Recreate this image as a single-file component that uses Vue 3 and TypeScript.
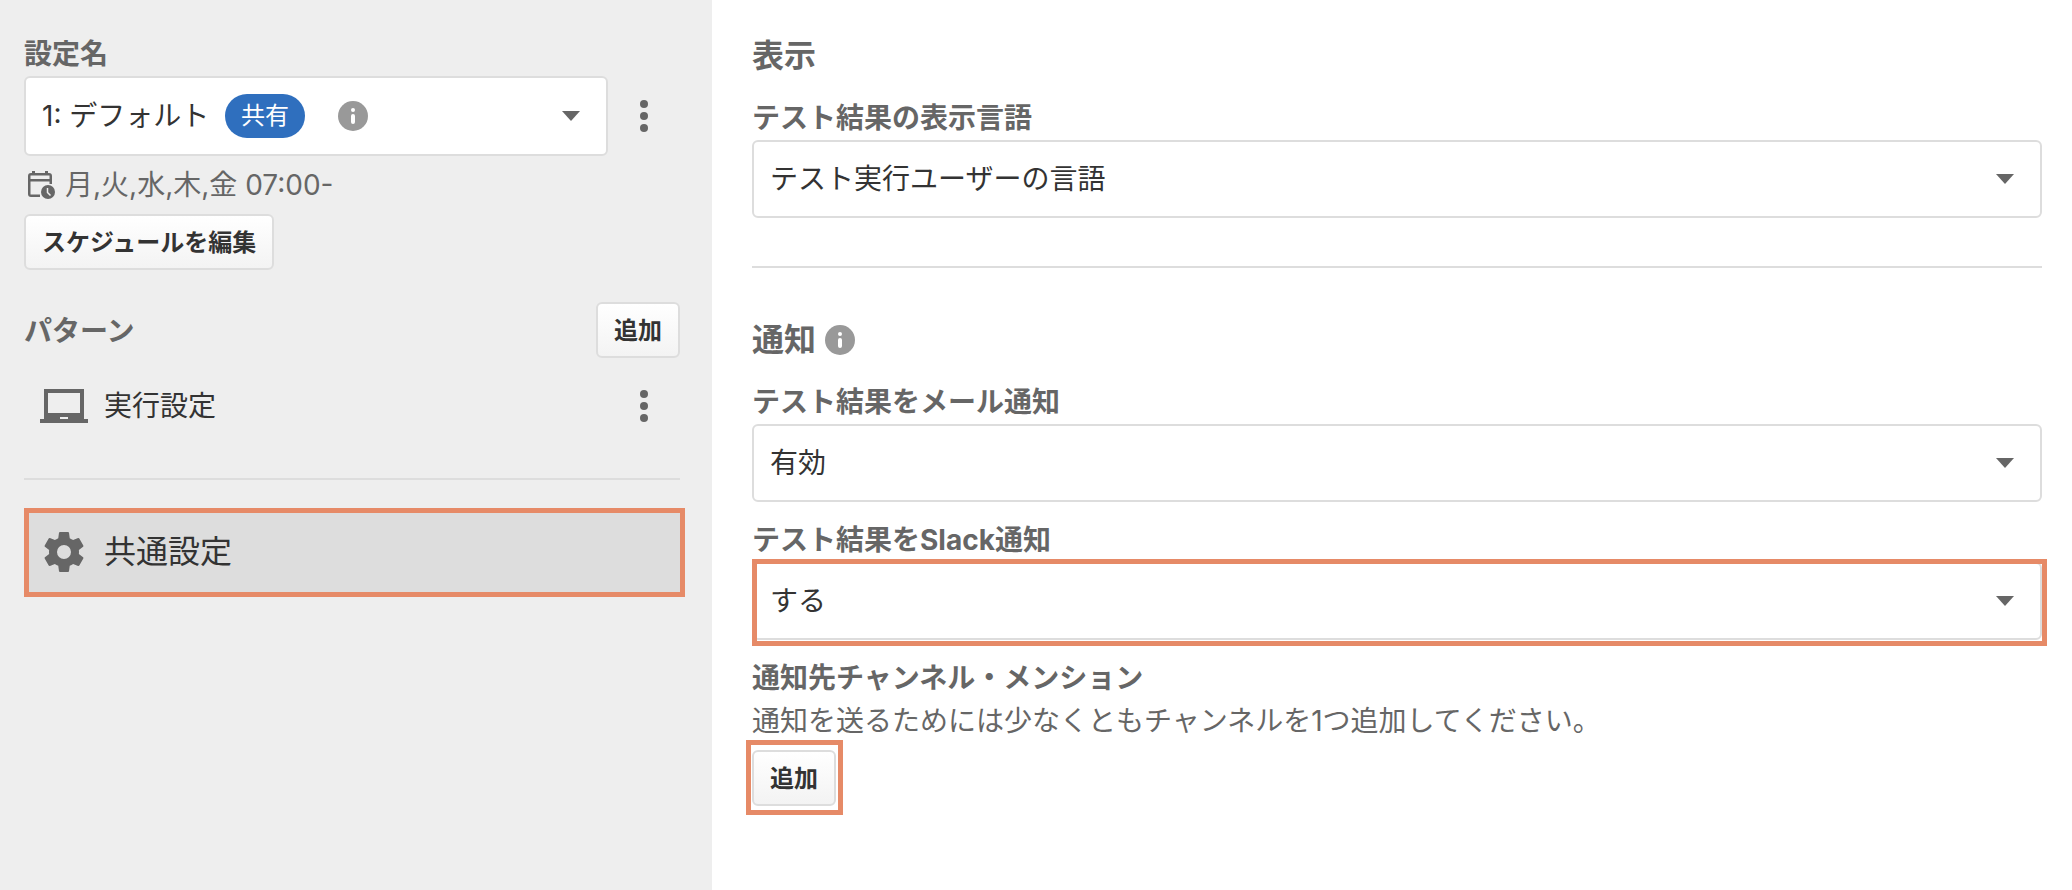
<script setup lang="ts">
import { ref } from 'vue'

const preset = ref('default')
const language = ref('user')
const mail = ref('on')
const slack = ref('on')
</script>

<template>
  <div class="page">
    <aside class="sidebar">
      <label class="label" for="preset">設定名</label>
      <div class="preset-row">
        <div class="select-box preset">
          <select id="preset" v-model="preset">
            <option value="default">1: デフォルト</option>
          </select>
          <div class="preset-tags">
            <span class="pill">共有</span>
            <svg class="info" viewBox="0 0 30 30" aria-hidden="true">
              <circle cx="15" cy="15" r="15" fill="#999" />
              <circle cx="15" cy="9" r="2" fill="#fff" />
              <rect x="13" y="13" width="4" height="10" rx="2" fill="#fff" />
            </svg>
          </div>
          <svg class="caret" viewBox="0 0 18 10" aria-hidden="true"><path d="M0 0h18L9 10z" /></svg>
        </div>
        <button class="dots" type="button" aria-label="設定メニュー">
          <svg viewBox="0 0 8 32" aria-hidden="true">
            <circle cx="4" cy="4" r="4" /><circle cx="4" cy="16" r="4" /><circle cx="4" cy="28" r="4" />
          </svg>
        </button>
      </div>
      <p class="schedule">
        <svg class="calendar" viewBox="0 0 28 28" aria-hidden="true">
          <path fill-rule="evenodd" d="M4 0h3v2h10V0h3v2h1a3 3 0 0 1 3 3v8h-2.500v-2.500h-19v13H12V26H3a3 3 0 0 1-3-3V5a3 3 0 0 1 3-3h1zM2.500 4.500V8h19V4.500z" />
          <circle cx="20" cy="21" r="7" />
          <path d="M19.500 17v4.500l3 3" fill="none" stroke="#eee" stroke-width="1.500" />
        </svg>
        <span>月,火,水,木,金 07:00-</span>
      </p>
      <button class="button" type="button">スケジュールを編集</button>

      <div class="pattern-head">
        <h2 class="label">パターン</h2>
        <button class="button" type="button">追加</button>
      </div>
      <div class="item">
        <svg class="item-icon" viewBox="0 0 48 34" aria-hidden="true">
          <path fill-rule="evenodd" d="M4 0h40v30h4v4H0v-4h4zM8 4v20h32V4zM20 28v2h8v-2z" />
        </svg>
        <span>実行設定</span>
        <button class="dots" type="button" aria-label="パターンメニュー">
          <svg viewBox="0 0 8 32" aria-hidden="true">
            <circle cx="4" cy="4" r="4" /><circle cx="4" cy="16" r="4" /><circle cx="4" cy="28" r="4" />
          </svg>
        </button>
      </div>
      <hr class="side-rule" />
      <button class="item common" type="button">
        <svg class="item-icon" viewBox="0 0 48 48" aria-hidden="true">
          <path transform="translate(24 24) scale(2) translate(-12 -12)" d="M12 15.500A3.500 3.500 0 0 1 8.500 12 3.500 3.500 0 0 1 12 8.500a3.500 3.500 0 0 1 3.500 3.500 3.500 3.500 0 0 1-3.500 3.500m7.430-2.530c.04-.32.07-.64.07-.97s-.03-.66-.07-1l2.110-1.630c.19-.15.24-.42.12-.64l-2-3.460c-.12-.22-.39-.31-.61-.22l-2.490 1c-.52-.39-1.060-.73-1.690-.98l-.37-2.650A.506.506 0 0 0 14 2h-4c-.25 0-.46.18-.5.42l-.37 2.650c-.63.25-1.170.59-1.690.98l-2.490-1c-.22-.09-.49 0-.61.22l-2 3.460c-.13.22-.07.49.12.64L4.570 11c-.04.34-.07.67-.07 1s.03.65.07.97l-2.110 1.660c-.19.15-.25.42-.12.64l2 3.460c.12.22.39.3.61.22l2.490-1.010c.52.4 1.060.74 1.690.99l.37 2.650c.04.24.25.42.5.42h4c.25 0 .46-.18.5-.42l.37-2.650c.63-.26 1.170-.59 1.690-.99l2.490 1.010c.22.08.49 0 .61-.22l2-3.460c.12-.22.07-.49-.12-.64z" />
        </svg>
        <span>共通設定</span>
      </button>
    </aside>

    <main class="content">
      <h1 class="heading">表示</h1>
      <div class="field">
        <label class="label" for="language">テスト結果の表示言語</label>
        <div class="select-box">
          <select id="language" v-model="language">
            <option value="user">テスト実行ユーザーの言語</option>
          </select>
          <svg class="caret" viewBox="0 0 18 10" aria-hidden="true"><path d="M0 0h18L9 10z" /></svg>
        </div>
      </div>
      <hr class="rule" />
      <h1 class="heading">
        通知
        <svg class="info" viewBox="0 0 30 30" aria-hidden="true">
          <circle cx="15" cy="15" r="15" fill="#999" />
          <circle cx="15" cy="9" r="2" fill="#fff" />
          <rect x="13" y="13" width="4" height="10" rx="2" fill="#fff" />
        </svg>
      </h1>
      <div class="field">
        <label class="label" for="mail">テスト結果をメール通知</label>
        <div class="select-box">
          <select id="mail" v-model="mail">
            <option value="on">有効</option>
          </select>
          <svg class="caret" viewBox="0 0 18 10" aria-hidden="true"><path d="M0 0h18L9 10z" /></svg>
        </div>
      </div>
      <div class="field">
        <label class="label" for="slack">テスト結果をSlack通知</label>
        <div class="select-box marked">
          <select id="slack" v-model="slack">
            <option value="on">する</option>
          </select>
          <svg class="caret" viewBox="0 0 18 10" aria-hidden="true"><path d="M0 0h18L9 10z" /></svg>
        </div>
      </div>
      <div class="field">
        <h2 class="label">通知先チャンネル・メンション</h2>
        <p class="hint">通知を送るためには少なくともチャンネルを1つ追加してください。</p>
        <button class="button add-channel" type="button">追加</button>
      </div>
    </main>
  </div>
</template>

<style>
body {
  margin: 0;
  background: #fff;
}
</style>

<style scoped>
.page {
  display: flex;
  min-height: 100vh;
  font: 28px/42px Inter, "Noto Sans CJK JP", sans-serif;
  color: #333;
}
.page * {
  box-sizing: border-box;
}
.sidebar {
  flex: 0 0 712px;
  padding: 30px 32px 32px 24px;
  background: #eee;
}
.content {
  flex: 1;
  min-width: 0;
  padding: 32px 30px 32px 40px;
}
svg {
  flex: none;
  fill: #666;
}
.label {
  display: block;
  margin: 0;
  padding-top: 2px;
  font-size: 28px;
  line-height: 44px;
  font-weight: 700;
  color: #666;
}
.heading {
  display: flex;
  align-items: center;
  gap: 9px;
  margin: 0;
  font-size: 32px;
  line-height: 48px;
  font-weight: 700;
  color: #666;
}
.field {
  margin-top: 14px;
}
.select-box {
  position: relative;
}
select {
  display: block;
  width: 100%;
  height: 78px;
  padding: 0 60px 0 16px;
  border: 2px solid #ddd;
  border-radius: 6px;
  appearance: none;
  background: #fff;
  color: #333;
  font: inherit;
}
.caret {
  position: absolute;
  right: 28px;
  top: 50%;
  width: 18px;
  height: 10px;
  margin-top: -5px;
  pointer-events: none;
}
.preset-row {
  display: flex;
  align-items: center;
}
.preset {
  flex: 1;
}
.preset select {
  height: 80px;
}
.preset-tags {
  position: absolute;
  left: 201px;
  top: 0;
  bottom: 0;
  display: flex;
  align-items: center;
  gap: 33px;
  pointer-events: none;
}
.pill {
  padding: 0 16px;
  border-radius: 22px;
  background: #2f6fbe;
  color: #fff;
  font-size: 24px;
  line-height: 44px;
}
.info {
  width: 30px;
  height: 30px;
}
.dots {
  flex: none;
  display: flex;
  justify-content: center;
  width: 72px;
  padding: 0;
  border: 0;
  background: none;
}
.dots svg {
  width: 8px;
  height: 32px;
}
.schedule {
  display: flex;
  align-items: center;
  gap: 9px;
  margin: 8px 0;
  padding-left: 4px;
  color: #666;
}
.calendar {
  width: 28px;
  height: 28px;
}
.button {
  display: block;
  height: 56px;
  padding: 2px 16px 0;
  border: 2px solid #ddd;
  border-radius: 6px;
  background: linear-gradient(#fff, #f3f3f3);
  color: #333;
  font: 700 24px/48px Inter, "Noto Sans CJK JP", sans-serif;
}
.pattern-head {
  display: flex;
  align-items: center;
  justify-content: space-between;
  margin: 32px 0 8px;
}
.item {
  display: flex;
  align-items: center;
  width: 100%;
  height: 80px;
  padding: 0 0 0 16px;
  gap: 16px;
}
.item span {
  flex: 1;
  text-align: left;
}
.item-icon {
  width: 48px;
}
.side-rule,
.rule {
  height: 2px;
  margin: 32px 0;
  border: 0;
  background: #ddd;
}
.rule {
  margin: 48px 0;
}
.common {
  position: relative;
  border: 0;
  background: #ddd;
  color: #333;
  font: 32px/48px Inter, "Noto Sans CJK JP", sans-serif;
}
.common::after,
.marked::after,
.add-channel::after {
  content: "";
  position: absolute;
  border: 5px solid #e68a67;
  pointer-events: none;
}
.common::after {
  inset: -4px -5px -5px 0;
}
.marked::after {
  inset: -3px -5px -6px 0;
}
.hint {
  margin: 0 0 8px;
  color: #666;
}
.add-channel {
  position: relative;
}
.add-channel::after {
  inset: -12px -9px -11px -8px;
}
</style>
